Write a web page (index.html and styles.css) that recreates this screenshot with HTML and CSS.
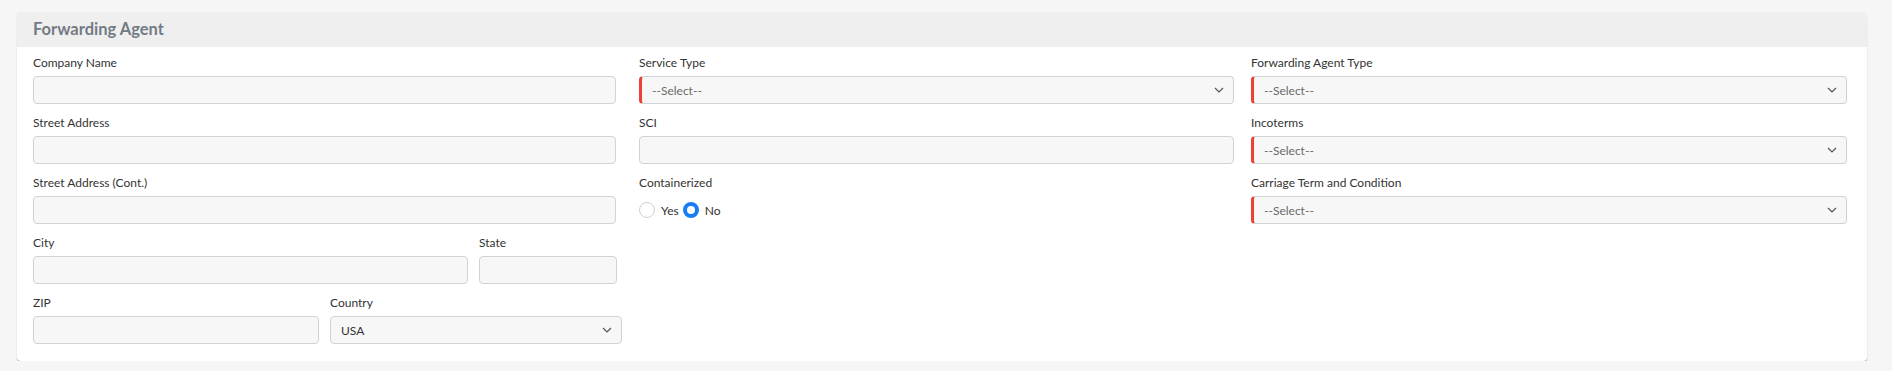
FILE: index.html
```html
<!DOCTYPE html>
<html lang="en">
<head>
    <meta charset="UTF-8">
    <meta name="viewport" content="width=device-width, initial-scale=1.0">
    <title>Forwarding Agent</title>
    <link rel="stylesheet" href="styles.css">
</head>
<body>
    <div class="card">
        <div class="card-header">Forwarding Agent</div>
        <div class="card-body">
            <div class="col col-1">
                <div class="field">
                    <label>Company Name</label>
                    <input type="text" class="input">
                </div>
                <div class="field">
                    <label>Street Address</label>
                    <input type="text" class="input">
                </div>
                <div class="field">
                    <label>Street Address (Cont.)</label>
                    <input type="text" class="input">
                </div>
                <div class="field-row">
                    <div class="field city">
                        <label>City</label>
                        <input type="text" class="input">
                    </div>
                    <div class="field state">
                        <label>State</label>
                        <input type="text" class="input">
                    </div>
                </div>
                <div class="field-row">
                    <div class="field zip">
                        <label>ZIP</label>
                        <input type="text" class="input">
                    </div>
                    <div class="field country">
                        <label>Country</label>
                        <div class="select">
                            <span class="value">USA</span>
                            <svg class="chevron" width="10" height="6" viewBox="0 0 10 6"><path d="M1 1l4 4 4-4" fill="none" stroke="#555" stroke-width="1.2"/></svg>
                        </div>
                    </div>
                </div>
            </div>

            <div class="col col-2">
                <div class="field">
                    <label>Service Type</label>
                    <div class="select required">
                        <span>--Select--</span>
                        <svg class="chevron" width="10" height="6" viewBox="0 0 10 6"><path d="M1 1l4 4 4-4" fill="none" stroke="#555" stroke-width="1.2"/></svg>
                    </div>
                </div>
                <div class="field">
                    <label>SCI</label>
                    <input type="text" class="input">
                </div>
                <div class="field">
                    <label>Containerized</label>
                    <div class="radios">
                        <span class="radio"></span><span class="radio-text">Yes</span>
                        <span class="radio checked"></span><span class="radio-text">No</span>
                    </div>
                </div>
            </div>

            <div class="col col-3">
                <div class="field">
                    <label>Forwarding Agent Type</label>
                    <div class="select required">
                        <span>--Select--</span>
                        <svg class="chevron" width="10" height="6" viewBox="0 0 10 6"><path d="M1 1l4 4 4-4" fill="none" stroke="#555" stroke-width="1.2"/></svg>
                    </div>
                </div>
                <div class="field">
                    <label>Incoterms</label>
                    <div class="select required">
                        <span>--Select--</span>
                        <svg class="chevron" width="10" height="6" viewBox="0 0 10 6"><path d="M1 1l4 4 4-4" fill="none" stroke="#555" stroke-width="1.2"/></svg>
                    </div>
                </div>
                <div class="field">
                    <label>Carriage Term and Condition</label>
                    <div class="select required">
                        <span>--Select--</span>
                        <svg class="chevron" width="10" height="6" viewBox="0 0 10 6"><path d="M1 1l4 4 4-4" fill="none" stroke="#555" stroke-width="1.2"/></svg>
                    </div>
                </div>
            </div>
        </div>
    </div>
</body>
</html>
```

FILE: styles.css
```css
body {
    margin: 0;
    background-color: #f6f6f6;
    font-family: Lato, "Noto Sans", sans-serif;
    font-size: 12px;
    color: #333;
}
.card {
    margin: 12px 0 0 17px;
    width: 1850px;
    background: #fff;
    border-radius: 4px;
    box-shadow: 0 1px 1px rgba(0, 0, 0, 0.35);
}
.card-header {
    height: 35px;
    line-height: 35px;
    padding-left: 16px;
    background: #efefef;
    border-radius: 4px 4px 0 0;
    font-size: 16.5px;
    font-weight: bold;
    color: #737b85;
}
.card-body {
    display: flex;
    padding: 8px 20px 6px 16px;
}
.col-1 {
    width: 583px;
}
.col-2 {
    width: 595px;
    margin-left: 23px;
}
.col-3 {
    width: 596px;
    margin-left: 17px;
}
.field {
    margin-bottom: 11px;
}
.field label {
    display: block;
    height: 16px;
    line-height: 16px;
    margin-bottom: 5px;
}
.field-row {
    display: flex;
    gap: 11px;
}
.field-row .field {
    flex: none;
}
.city { width: 435px; }
.state { width: 138px; }
.zip { width: 286px; }
.country { width: 292px; }
.input,
.select {
    display: block;
    box-sizing: border-box;
    width: 100%;
    height: 28px;
    margin: 0;
    background: #f7f7f7;
    border: 1px solid #cfd3d8;
    border-radius: 4px;
    font-family: inherit;
    font-size: 12px;
}
.select {
    display: flex;
    align-items: center;
    justify-content: space-between;
    padding: 0 9px 0 10px;
    color: #6a6a6a;
}
.select .value {
    color: #333;
}
.select.required {
    border-left: 3px solid #ee4036;
}
.chevron {
    flex: none;
}
.radios {
    display: flex;
    align-items: center;
    height: 28px;
}
.radio {
    box-sizing: border-box;
    width: 16px;
    height: 16px;
    border: 1px solid #cdd1d6;
    border-radius: 50%;
    background: #fff;
}
.radio.checked {
    border: 4px solid #1a7cf5;
}
.radio-text {
    margin: 0 4px 0 6px;
}
```
